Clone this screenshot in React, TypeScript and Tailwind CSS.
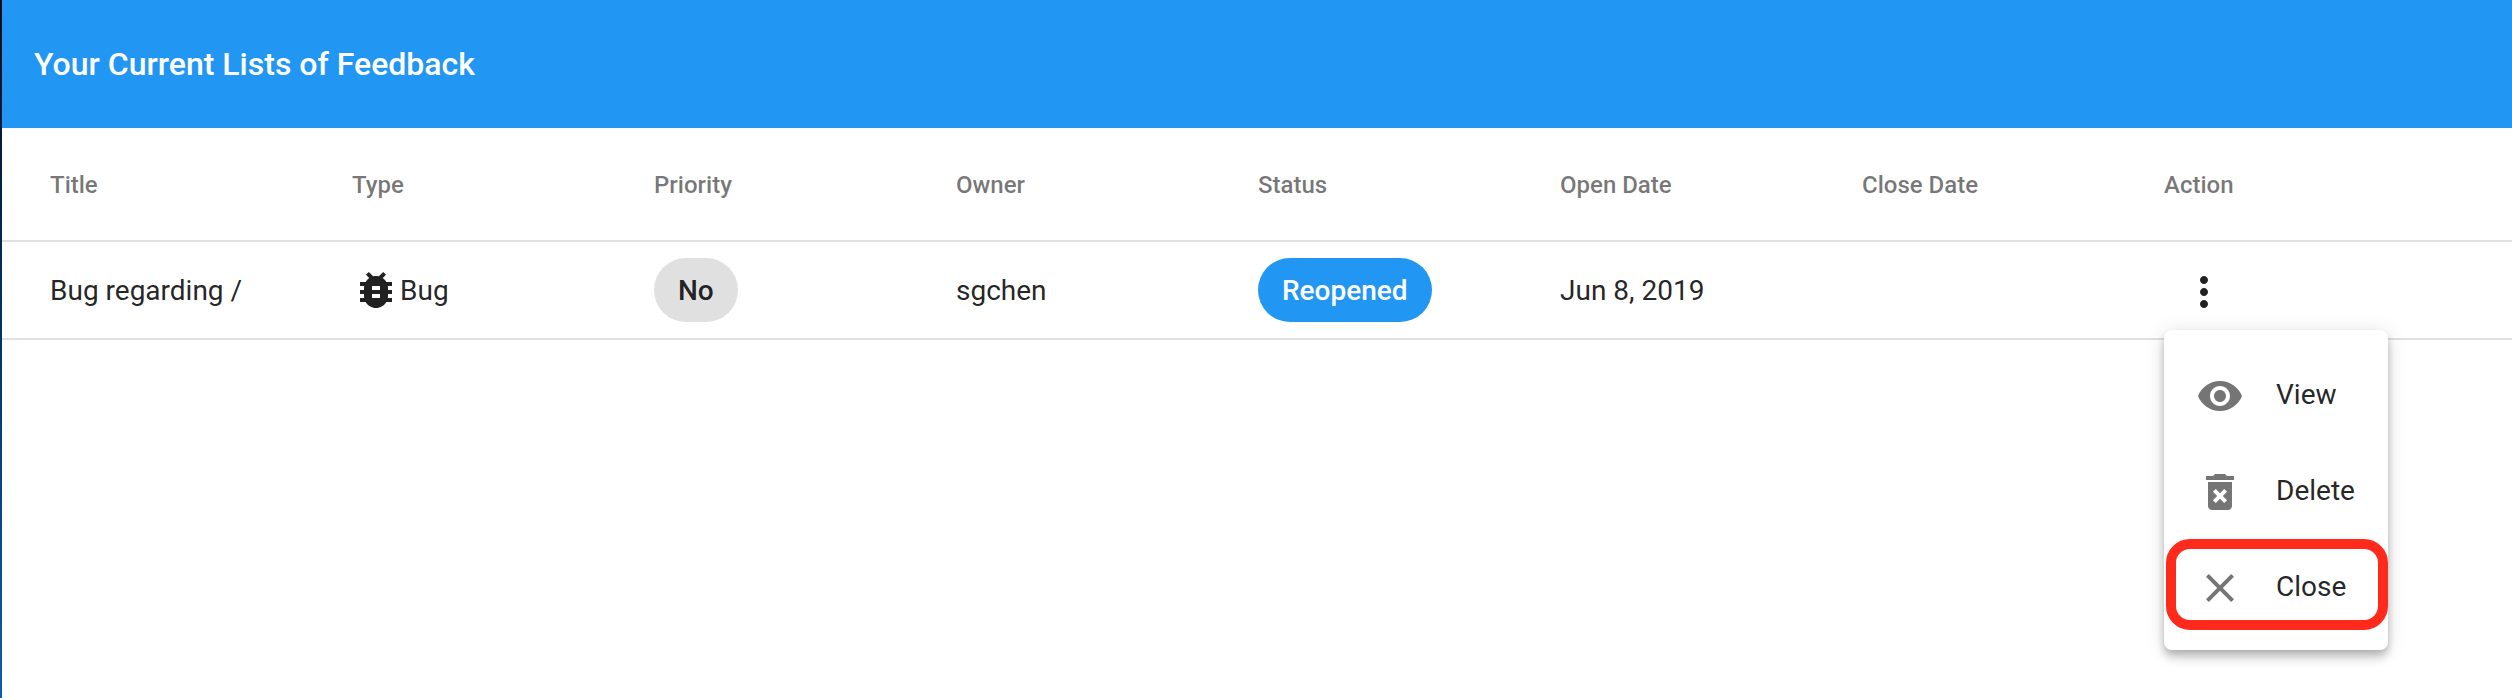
import React from "react";

const columns = ["Title", "Type", "Priority", "Owner", "Status", "Open Date", "Close Date", "Action"];

function Icon({ d, className }: { d: string; className: string }) {
  return (
    <svg viewBox="0 0 24 24" className={className} fill="currentColor" aria-hidden="true">
      <path d={d} />
    </svg>
  );
}

const icons = {
  bug: "M20 8h-2.81c-.45-.78-1.07-1.45-1.82-1.96L17 4.41 15.59 3l-2.17 2.17C12.96 5.06 12.49 5 12 5c-.49 0-.96.06-1.41.17L8.41 3 7 4.41l1.62 1.63C7.88 6.55 7.26 7.22 6.81 8H4v2h2.09c-.05.33-.09.66-.09 1v1H4v2h2v1c0 .34.04.67.09 1H4v2h2.81c1.04 1.79 2.97 3 5.19 3s4.15-1.21 5.19-3H20v-2h-2.09c.05-.33.09-.66.09-1v-1h2v-2h-2v-1c0-.34-.04-.67-.09-1H20V8zm-6 8h-4v-2h4v2zm0-4h-4v-2h4v2z",
  more: "M12 8c1.1 0 2-.9 2-2s-.9-2-2-2-2 .9-2 2 .9 2 2 2zm0 2c-1.1 0-2 .9-2 2s.9 2 2 2 2-.9 2-2-.9-2-2-2zm0 6c-1.1 0-2 .9-2 2s.9 2 2 2 2-.9 2-2-.9-2-2-2z",
  view: "M12 4.5C7 4.5 2.73 7.61 1 12c1.73 4.39 6 7.5 11 7.5s9.27-3.11 11-7.5c-1.73-4.39-6-7.5-11-7.5zM12 17c-2.76 0-5-2.24-5-5s2.24-5 5-5 5 2.24 5 5-2.24 5-5 5zm0-8c-1.66 0-3 1.34-3 3s1.34 3 3 3 3-1.34 3-3-1.34-3-3-3z",
  remove: "M6 19c0 1.1.9 2 2 2h8c1.1 0 2-.9 2-2V7H6v12zm2.46-7.12l1.41-1.41L12 12.59l2.12-2.12 1.41 1.41L13.41 14l2.12 2.12-1.41 1.41L12 15.41l-2.12 2.12-1.41-1.41L10.59 14l-2.13-2.12zM15.5 4l-1-1h-5l-1 1H5v2h14V4z",
  close: "M19 6.41L17.59 5 12 10.59 6.41 5 5 6.41 10.59 12 5 17.59 6.41 19 12 13.41 17.59 19 19 17.59 13.41 12z",
};

const menu = [
  { label: "View", icon: icons.view },
  { label: "Delete", icon: icons.remove },
  { label: "Close", icon: icons.close },
];

export default function App() {
  return (
    <div className="flex h-[698px] w-[2512px] overflow-hidden bg-white font-['Roboto',sans-serif] text-[28px] text-black/87">
      <div className="w-[2px] shrink-0 bg-linear-to-b from-[#020d1a] via-[#03356a] to-[#0d5cab]" />
      <main className="w-[2512px] shrink-0">
        <header className="flex h-32 items-center bg-[#2196f3] px-8">
          <h1 className="text-[32px] font-medium text-white">Your Current Lists of Feedback</h1>
        </header>
        <div className="grid h-[114px] grid-cols-[repeat(8,302px)] items-center border-b-2 border-black/12 px-12 pt-0.5 text-2xl font-medium text-black/54">
          {columns.map((c) => (
            <div key={c}>{c}</div>
          ))}
        </div>
        <div className="grid h-[98px] grid-cols-[repeat(8,302px)] items-center border-b-2 border-black/12 px-12">
          <div className="pt-0.5">Bug regarding /</div>
          <div className="flex items-center">
            <Icon d={icons.bug} className="size-12" />
            <span className="pt-0.5">Bug</span>
          </div>
          <div className="flex">
            <span className="flex h-16 items-center rounded-full bg-[#e0e0e0] px-6 pt-0.5 font-medium">No</span>
          </div>
          <div className="pt-0.5">sgchen</div>
          <div className="flex">
            <span className="flex h-16 items-center rounded-full bg-[#2196f3] px-6 pt-0.5 font-medium text-white">Reopened</span>
          </div>
          <div className="pt-0.5">Jun 8, 2019</div>
          <div />
          <div className="relative">
            <button className="flex size-20 items-center justify-center" aria-label="Actions">
              <Icon d={icons.more} className="mt-1 size-12" />
            </button>
            <div className="absolute top-20 left-0 w-[224px] rounded-lg bg-white py-4 shadow-[0_4px_8px_-2px_rgba(0,0,0,0.2),0_8px_10px_0_rgba(0,0,0,0.14),0_2px_20px_0_rgba(0,0,0,0.12)]">
              {menu.map((m) => (
                <div key={m.label} className="flex h-24 items-center px-8">
                  <Icon d={m.icon} className="mt-1 mr-8 size-12 shrink-0 text-black/54" />
                  <span className="pt-0.5">{m.label}</span>
                </div>
              ))}
              <div className="absolute top-[209px] left-[2px] h-[91px] w-[222px] rounded-[24px] border-10 border-[#ff2a1c]" />
            </div>
          </div>
        </div>
      </main>
    </div>
  );
}
